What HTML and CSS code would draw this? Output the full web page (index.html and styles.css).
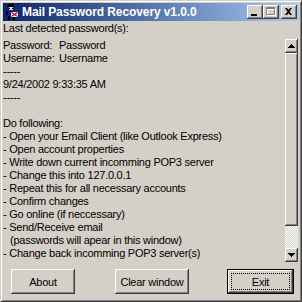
FILE: index.html
```html
<!DOCTYPE html>
<html>
<head>
<meta charset="utf-8">
<link rel="stylesheet" href="styles.css">
</head>
<body>
<div class="window">
  <div class="titlebar">
    <svg class="appicon" width="16" height="16" viewBox="0 0 16 16">
      <rect x="4" y="0" width="6" height="2" fill="#000"/>
      <rect x="3" y="2" width="8" height="1" fill="#000"/>
      <rect x="5" y="3" width="4" height="3" fill="#f0d8c8"/>
      <rect x="5" y="4" width="1" height="1" fill="#000"/>
      <rect x="8" y="4" width="1" height="1" fill="#000"/>
      <rect x="3" y="6" width="8" height="6" fill="#1020a0"/>
      <rect x="2" y="7" width="2" height="4" fill="#000"/>
      <rect x="7" y="8" width="7" height="5" fill="#fff"/>
      <path d="M7.5 8.5 L13.5 12.5 M13.5 8.5 L7.5 12.5" stroke="#d00000" stroke-width="1.2"/>
      <rect x="4" y="12" width="2" height="4" fill="#000"/>
      <rect x="9" y="13" width="2" height="3" fill="#000"/>
    </svg>
    <span class="title">Mail Password Recovery v1.0.0</span>
    <div class="tbtns">
      <span class="tbtn"><svg width="16" height="14" viewBox="0 0 16 14"><rect x="4" y="9" width="6" height="2" fill="#000"/></svg></span>
      <span class="tbtn"><svg width="16" height="14" viewBox="0 0 16 14">
        <path d="M4.5 3.5h8v7h-8z M4 4.5h9" fill="none" stroke="#fff"/>
        <path d="M3.5 2.5h8v7h-8z M3 3.5h9" fill="none" stroke="#808080"/>
      </svg></span>
      <span class="tbtn gap"><svg width="16" height="14" viewBox="0 0 16 14"><path d="M4 3h2l1.5 2 1.5-2h2l-2.5 3.5 2.5 3.5h-2l-1.5-2-1.5 2h-2l2.5-3.5z" fill="#000"/></svg></span>
    </div>
  </div>
  <div class="label">Last detected password(s):</div>
  <div class="memo">
    <div class="memo-text">
      <div class="line"><span class="key">Password:</span>Password</div>
      <div class="line"><span class="key">Username:</span>Username</div>
      <div class="line">-----</div>
      <div class="line">9/24/2002 9:33:35 AM</div>
      <div class="line">-----</div>
      <div class="line"> </div>
      <div class="line">Do following:</div>
      <div class="line">- Open your Email Client (like Outlook Express)</div>
      <div class="line">- Open account properties</div>
      <div class="line">- Write down current incomming POP3 server</div>
      <div class="line">- Change this into 127.0.0.1</div>
      <div class="line">- Repeat this for all necessary accounts</div>
      <div class="line">- Confirm changes</div>
      <div class="line">- Go online (if neccessary)</div>
      <div class="line">- Send/Receive email</div>
      <div class="line indent">(passwords will apear in this window)</div>
      <div class="line">- Change back incomming POP3 server(s)</div>
    </div>
    <div class="scrollbar">
      <div class="sbtn"><svg width="13" height="14" viewBox="0 0 13 14"><path d="M6 5h1v1h-1z M5 6h3v1h-3z M4 7h5v1h-5z M3 8h7v1h-7z" fill="#000"/></svg></div>
      <div class="thumb"></div>
      <div class="track"></div>
      <div class="sbtn"><svg width="13" height="14" viewBox="0 0 13 14"><path d="M3 5h7v1h-7z M4 6h5v1h-5z M5 7h3v1h-3z M6 8h1v1h-1z" fill="#000"/></svg></div>
    </div>
  </div>
  <div class="buttons">
    <button class="btn about">About</button>
    <button class="btn clear">Clear window</button>
    <button class="btn exit"><span class="focus">Exit</span></button>
  </div>
</div>
</body>
</html>
```
FILE: styles.css
```css
html, body {
  margin: 0;
  padding: 0;
  background: #D4D0C8;
}
body {
  font-family: "Liberation Sans", Arial, sans-serif;
  font-size: 11px;
  color: #000;
}
.window {
  box-sizing: border-box;
  width: 302px;
  height: 302px;
  border: 1px solid;
  border-color: #D4D0C8 #404040 #404040 #D4D0C8;
  box-shadow: inset 1px 1px #fff, inset -1px -1px #808080;
  padding: 2px;
  background: #D4D0C8;
  display: flex;
  flex-direction: column;
  overflow: hidden;
}
.titlebar {
  height: 18px;
  flex: none;
  display: flex;
  align-items: center;
  background: linear-gradient(to right, #0A246A, #A6CAF0);
  padding-left: 1px;
  padding-right: 2px;
}
.appicon {
  flex: none;
  display: block;
}
.title {
  margin-left: 2px;
  color: #fff;
  font-family: "Liberation Sans", Arial, sans-serif;
  font-weight: bold;
  font-size: 12px;
  letter-spacing: -0.1px;
  white-space: nowrap;
}
.tbtns {
  margin-left: auto;
  display: flex;
}
.tbtn {
  width: 16px;
  height: 14px;
  background: #D4D0C8;
  box-shadow: inset -1px -1px #404040, inset 1px 1px #fff, inset -2px -2px #808080;
  display: block;
}
.tbtn svg {
  display: block;
}
.tbtn.gap {
  margin-left: 2px;
}
.label {
  line-height: 13px;
  margin-top: 1px;
  letter-spacing: -0.25px;
  white-space: nowrap;
}
.memo {
  margin-top: 3px;
  height: 225px;
  flex: none;
  display: flex;
  margin-right: 1px;
}
.memo-text {
  flex: 1;
  padding-top: 1px;
  letter-spacing: -0.25px;
  overflow: hidden;
}
.line {
  line-height: 13px;
  height: 13px;
  white-space: pre;
}
.line.indent {
  padding-left: 7px;
}
.key {
  display: inline-block;
  width: 56px;
}
.scrollbar {
  width: 13px;
  display: flex;
  flex-direction: column;
  padding-top: 1px;
}
.sbtn {
  height: 14px;
  flex: none;
  background: #D4D0C8;
  box-shadow: inset -1px -1px #404040, inset 1px 1px #fff, inset -2px -2px #808080;
}
.sbtn svg {
  display: block;
}
.thumb {
  height: 173px;
  flex: none;
  background: #D4D0C8;
  box-shadow: inset -1px -1px #404040, inset 1px 1px #fff, inset -2px -2px #808080;
}
.track {
  height: 22px;
  flex: none;
  background: repeating-conic-gradient(#fff 0% 25%, #D4D0C8 0% 50%) 0 0 / 2px 2px;
}
.buttons {
  display: flex;
  margin-top: 6px;
  height: 25px;
}
.btn {
  box-sizing: border-box;
  height: 25px;
  padding: 0;
  border: none;
  background: #D4D0C8;
  font-family: "Liberation Sans", Arial, sans-serif;
  font-size: 11px;
  letter-spacing: -0.25px;
  color: #000;
  box-shadow: inset -1px -1px #404040, inset 1px 1px #fff, inset -2px -2px #808080;
  display: flex;
  align-items: center;
  justify-content: center;
}
.about {
  margin-left: 8px;
  width: 64px;
}
.clear {
  margin-left: 40px;
  width: 74px;
}
.exit {
  margin-left: 38px;
  width: 67px;
  border: 1px solid #000;
  padding: 3px;
  align-items: stretch;
}
.focus {
  flex: 1;
  border: 1px dotted #000;
  display: flex;
  align-items: center;
  justify-content: center;
}
```
